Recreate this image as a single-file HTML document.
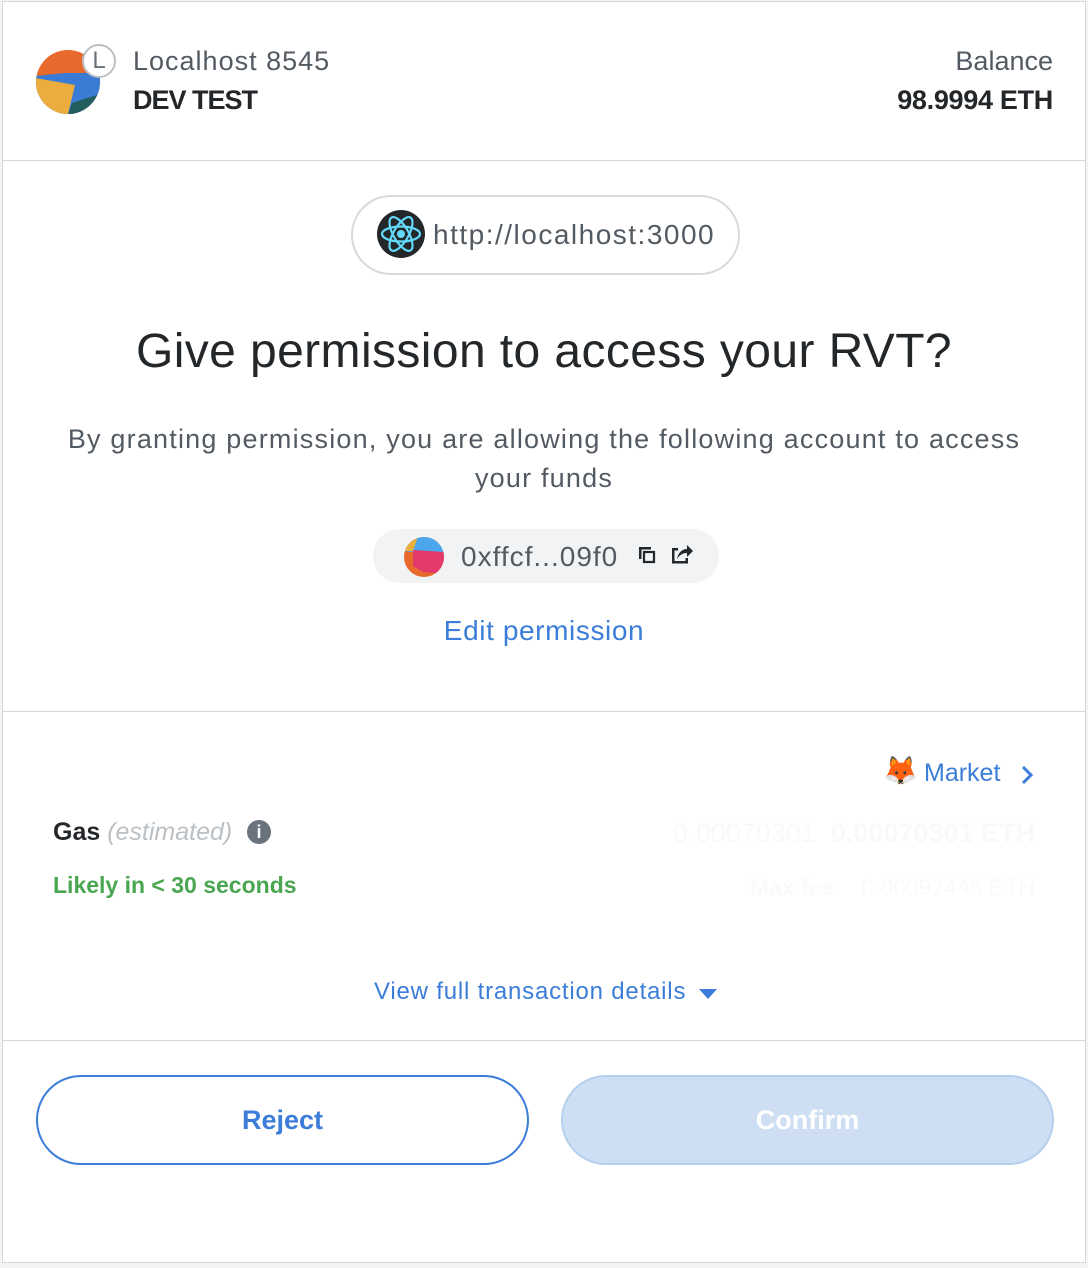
<!DOCTYPE html>
<html><head><meta charset="utf-8"><style>
*{margin:0;padding:0;box-sizing:border-box}
body{width:1088px;height:1268px;background:#f2f3f4;font-family:"Liberation Sans",sans-serif;position:relative;overflow:hidden;color:#24272a}
.frame{position:absolute;left:2px;top:1px;width:1084px;height:1262px;background:#fff;border:1px solid #d6d9dc}
.a{position:absolute;white-space:nowrap}
.hr{position:absolute;left:0;width:100%;height:1px;background:#d6d9dc}
</style></head><body>
<div class="frame">
 <svg class="a" style="left:32px;top:46px" width="68" height="68" viewBox="0 0 68 68">
  <defs><clipPath id="c"><circle cx="33" cy="34" r="32"/></clipPath></defs>
  <g clip-path="url(#c)">
   <rect x="0" y="0" width="68" height="68" fill="#e8692c"/>
   <polygon points="0,28 30,25 68,25 68,58 40,70 0,70" fill="#3a7bd5"/>
   <polygon points="0,30 40,37 32,70 0,70" fill="#ebad3e"/>
   <polygon points="32,70 37,55 68,45 68,70" fill="#225e5d"/>
  </g>
 </svg>
 <div class="a" style="left:79px;top:42px;width:34px;height:34px;border-radius:50%;background:#fff;border:2px solid #bbc0c5;font-size:24px;color:#6a737d;text-align:center;line-height:29px">L</div>
 <div class="a" style="left:130px;top:44px;font-size:27px;color:#535a61;letter-spacing:1px">Localhost 8545</div>
 <div class="a" style="left:130px;top:83px;font-size:27px;font-weight:bold;color:#24272a;letter-spacing:-1px">DEV TEST</div>
 <div class="a" style="right:32px;top:44px;font-size:27px;color:#535a61">Balance</div>
 <div class="a" style="right:32px;top:83px;font-size:27px;font-weight:bold;letter-spacing:-0.3px">98.9994 ETH</div>
 <div class="hr" style="top:158px"></div>

 <div class="a" style="left:348px;top:193px;width:389px;height:80px;border:2px solid #d6d9dc;border-radius:40px"></div>
 <svg class="a" style="left:374px;top:208px" width="48" height="48" viewBox="0 0 48 48">
  <circle cx="24" cy="24" r="24" fill="#24272a"/>
  <g fill="none" stroke="#61dafb" stroke-width="2.2">
   <ellipse cx="24" cy="24" rx="19" ry="7.5"/>
   <ellipse cx="24" cy="24" rx="19" ry="7.5" transform="rotate(60 24 24)"/>
   <ellipse cx="24" cy="24" rx="19" ry="7.5" transform="rotate(-60 24 24)"/>
  </g>
  <circle cx="24" cy="24" r="4" fill="#61dafb"/>
 </svg>
 <div class="a" style="left:430px;top:217px;font-size:28px;color:#535a61;letter-spacing:1.5px">http://localhost:3000</div>

 <div class="a" style="left:0;width:100%;text-align:center;top:322px;font-size:48px;color:#24272a;letter-spacing:0.4px">Give permission to access your RVT?</div>
 <div class="a" style="left:0;width:100%;text-align:center;top:418px;font-size:27px;color:#535a61;line-height:39px;white-space:normal;letter-spacing:1.2px">By granting permission, you are allowing the following account to access<br>your funds</div>

 <div class="a" style="left:370px;top:527px;width:346px;height:54px;border-radius:27px;background:#f2f3f4"></div>
 <svg class="a" style="left:400px;top:534px" width="42" height="42" viewBox="0 0 42 42">
  <defs><clipPath id="d"><circle cx="21" cy="21" r="20"/></clipPath></defs>
  <g clip-path="url(#d)">
   <rect width="42" height="42" fill="#e8692c"/>
   <polygon points="0,0 42,0 42,20 0,15" fill="#4ba7ec"/>
   <polygon points="0,0 15,0 10,15 0,15" fill="#ebad3e"/>
   <polygon points="10,14 42,16 42,38 20,36 10,30" fill="#e33a6b"/>
  </g>
 </svg>
 <div class="a" style="left:458px;top:539px;font-size:28px;color:#535a61;letter-spacing:1px">0xffcf...09f0</div>
 <svg class="a" style="left:634px;top:543px" width="20" height="20" viewBox="0 0 20 20"><path d="M2 2h12v2.5H4.5V14H2z" fill="#24272a"/><rect x="7" y="7" width="10" height="10" fill="none" stroke="#24272a" stroke-width="2.2"/></svg>
 <svg class="a" style="left:666px;top:540px" width="26" height="24" viewBox="0 0 26 24"><path d="M3 6h6v2.5H5.5v10.5h11v-3h2.5v5.5H3z" fill="#24272a"/><path d="M8 17c1-6 5-10 10-10V3l6 6-6 6v-4c-4 0-7 1.5-10 6z" fill="#24272a"/></svg>

 <div class="a" style="left:0;width:100%;text-align:center;top:613px;font-size:28px;color:#3b7dd8;letter-spacing:0.6px">Edit permission</div>
 <div class="hr" style="top:709px"></div>

 <div class="a" style="left:880px;top:752px;font-size:28px">🦊</div>
 <div class="a" style="left:921px;top:757px;font-size:25px;color:#3b7dd8">Market</div>
 <svg class="a" style="left:1016px;top:763px" width="16" height="20" viewBox="0 0 16 20"><path d="M4 2l8 8-8 8" fill="none" stroke="#3b7dd8" stroke-width="3"/></svg>

 <div class="a" style="left:50px;top:816px;font-size:25px;font-weight:bold;color:#24272a">Gas <span style="font-weight:normal;font-style:italic;color:#bbc0c5">(estimated)</span></div>
 <div class="a" style="left:244px;top:818px;width:24px;height:24px;border-radius:50%;background:#6a737d;color:#fff;font-weight:bold;font-size:18px;text-align:center;line-height:24px">i</div>
 <div class="a" style="left:50px;top:870px;font-size:23px;font-weight:bold;color:#4ba651">Likely in &lt; 30 seconds</div>
 <div class="a" style="right:50px;top:816px;font-size:27px;color:#f9f9fa">0.00070301 &nbsp;<b>0.00070301 ETH</b></div>
 <div class="a" style="right:50px;top:872px;font-size:23px;color:#fafafa"><b>Max fee:</b> &nbsp; 0.00092445 ETH</div>

 <div class="a" style="left:371px;top:976px;font-size:24px;color:#3b7dd8;letter-spacing:0.8px">View full transaction details</div>
 <svg class="a" style="left:694px;top:985px" width="22" height="14" viewBox="0 0 22 14"><path d="M2 2h18l-9 10z" fill="#3b7dd8"/></svg>
 <div class="hr" style="top:1038px"></div>

 <div class="a" style="left:33px;top:1073px;width:493px;height:90px;border:2px solid #3b7dd8;border-radius:45px;text-align:center;line-height:86px;font-size:27px;font-weight:bold;color:#3b7dd8">Reject</div>
 <div class="a" style="left:558px;top:1073px;width:493px;height:90px;border:2px solid #b5cfee;background:#cedff3;border-radius:45px;text-align:center;line-height:86px;font-size:27px;font-weight:bold;color:#fff">Confirm</div>
</div>
</body></html>
